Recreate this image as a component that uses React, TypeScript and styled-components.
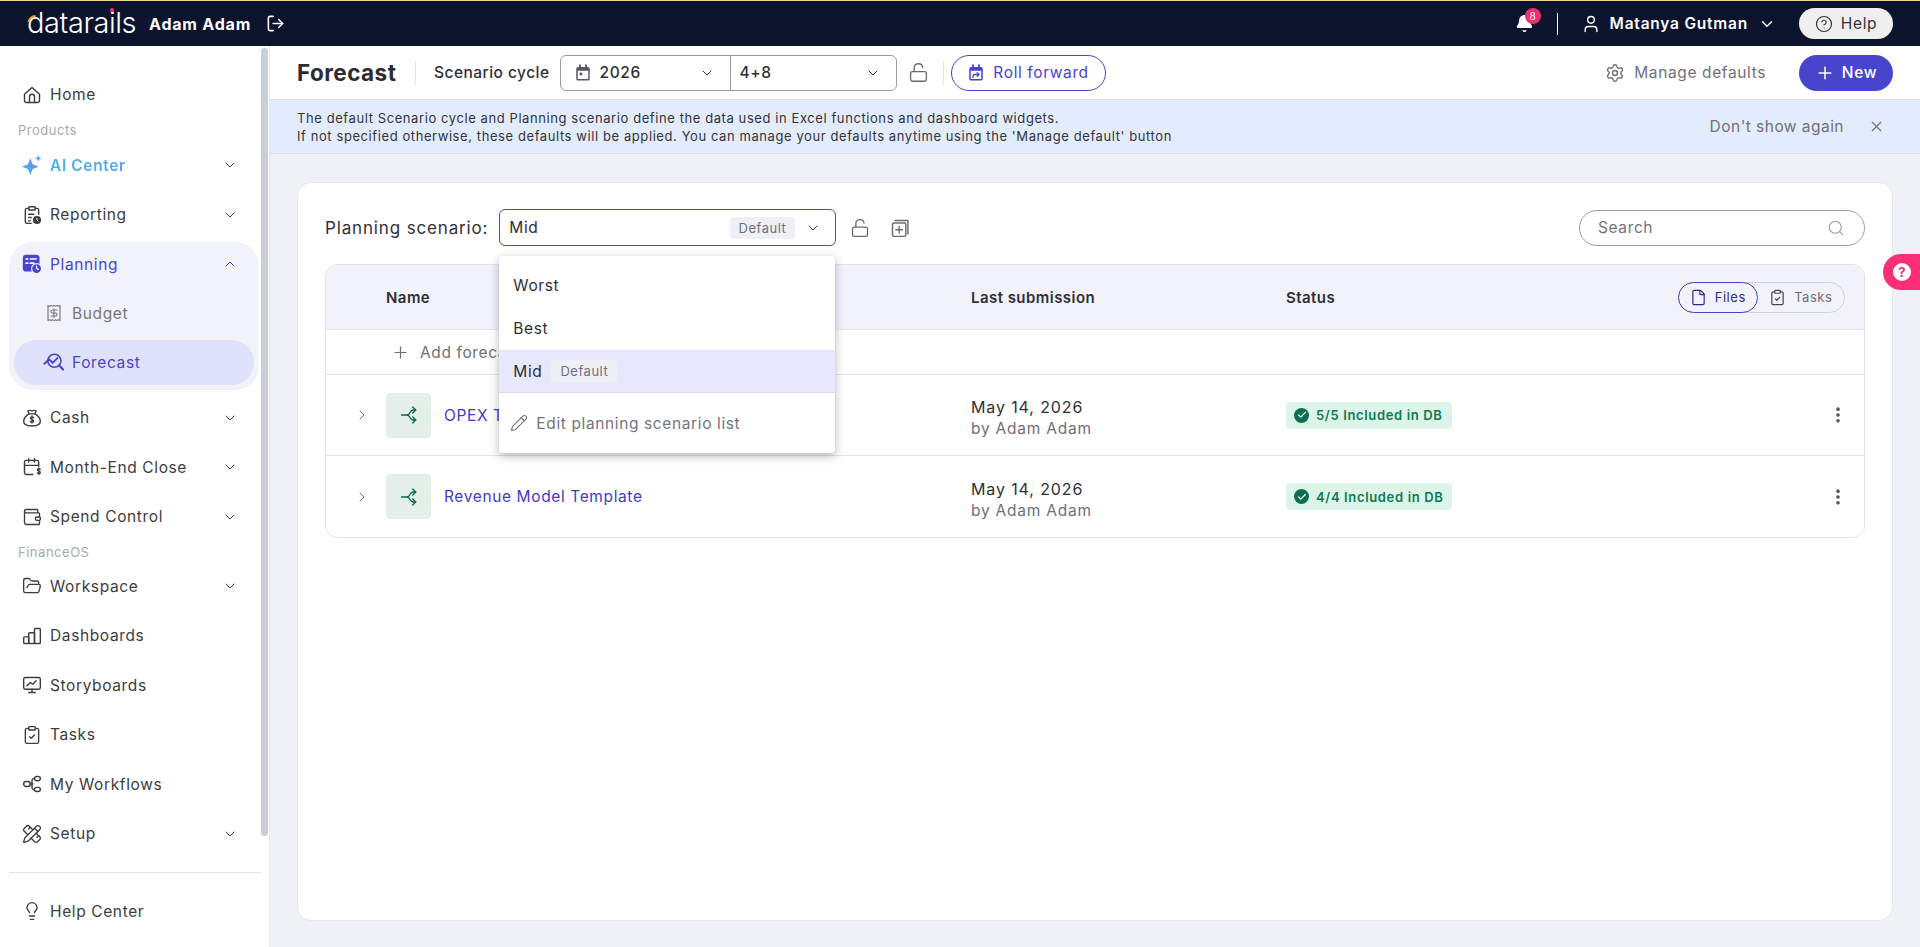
import React from "react";
import styled, { createGlobalStyle } from "styled-components";
import {
  Bell,
  Check,
  ChevronDown,
  ChevronRight,
  ChevronUp,
  CircleHelp,
  ClipboardCheck,
  File,
  FolderOpen,
  Lightbulb,
  LockOpen,
  LogOut,
  MoreVertical,
  Pencil,
  PencilRuler,
  Plus,
  Receipt,
  Search,
  Settings,
  User,
  Wallet,
  X,
} from "lucide-react";

const Global = createGlobalStyle`
  * { box-sizing: border-box; letter-spacing: 0.04em; }
  html, body { margin: 0; height: 100%; }
  body {
    font-family: Inter, "Open Sans", sans-serif;
    color: #2f2f35;
    background: #f0f1f6;
    overflow: hidden;
  }
`;

const Page = styled.div`
  height: 947px;
  display: flex;
  flex-direction: column;
`;

const TopBar = styled.header`
  height: 46px;
  flex-shrink: 0;
  background: #0b132d;
  border-top: 1px solid #f6cf9c;
  display: flex;
  align-items: center;
  padding: 0 27px;
  color: #fff;
`;

const Logo = styled.div`
  position: relative;
  font-size: 29px;
  font-weight: 300;
  width: 113px;
  letter-spacing: -0.015em;
  line-height: 1;
  margin-top: -3px;
  white-space: nowrap;
  svg {
    position: absolute;
    left: 0;
    top: 0;
  }
`;

const LogoI = styled.span`
  position: relative;
  letter-spacing: -0.015em;
  &::after {
    content: "";
    position: absolute;
    left: 50%;
    top: 3px;
    width: 4px;
    height: 4px;
    margin-left: -2px;
    border-radius: 50%;
    background: #ee2e6f;
  }
`;

const Account = styled.span`
  margin-left: 9px;
  font-size: 16px;
  font-weight: 700;
  letter-spacing: 0.05em;
`;

const ExitBtn = styled.span`
  display: flex;
  margin-left: 15px;
`;

const TopRight = styled.div`
  margin-left: auto;
  display: flex;
  align-items: center;
`;

const BellWrap = styled.span`
  position: relative;
  display: flex;
  margin-right: 23px;
`;

const Badge = styled.span`
  position: absolute;
  left: 10px;
  top: -6px;
  width: 16px;
  height: 16px;
  border-radius: 50%;
  background: #ee2e6f;
  font-size: 10px;
  letter-spacing: 0;
  display: flex;
  align-items: center;
  justify-content: center;
`;

const VDivider = styled.span<{ $h: number; $color: string }>`
  width: 1px;
  height: ${(p) => p.$h}px;
  background: ${(p) => p.$color};
  flex-shrink: 0;
`;

const UserIcon = styled.span`
  display: flex;
  margin-left: 23px;
`;

const UserName = styled.span`
  font-size: 15.5px;
  font-weight: 600;
  letter-spacing: 0.05em;
  margin: 0 10px 0 9px;
`;

const HelpBtn = styled.button`
  margin-left: 23px;
  width: 94px;
  height: 31px;
  border: 0;
  border-radius: 16px;
  background: #efefef;
  color: #33333a;
  font: inherit;
  font-size: 15.5px;
  display: flex;
  align-items: center;
  justify-content: center;
  gap: 8px;
`;

const Body = styled.div`
  flex: 1;
  min-height: 0;
  display: flex;
`;

const Sidebar = styled.aside`
  position: relative;
  width: 270px;
  flex-shrink: 0;
  background: #fff;
  border-right: 1px solid #e6e7ed;
  padding: 24px 0 11px;
  display: flex;
  flex-direction: column;
`;

const Thumb = styled.div`
  position: absolute;
  left: 261px;
  top: 2px;
  width: 7px;
  height: 788px;
  border-radius: 4px;
  background: #c9ced8;
`;

const NavRow = styled.div`
  height: 49.5px;
  padding: 0 23px 0 22px;
  display: flex;
  align-items: center;
  gap: 8px;
  width: 261px;
  font-size: 15.5px;
  color: #3c3c42;
  svg {
    flex-shrink: 0;
  }
`;

const NavLabel = styled.span`
  flex: 1;
`;

const AiLabel = styled(NavLabel)`
  font-weight: 600;
  background: linear-gradient(90deg, #3fb6e4, #6b8bfb);
  -webkit-background-clip: text;
  background-clip: text;
  color: transparent;
`;

const SectionLabel = styled.div<{ $h: number }>`
  height: ${(p) => p.$h}px;
  padding-left: 18px;
  display: flex;
  align-items: center;
  font-size: 13px;
  color: #a9a9af;
`;

const PlanningGroup = styled.div`
  margin: 2.5px 0 3px 9px;
  width: 250px;
  height: 148px;
  border-radius: 24px;
  background: #f1f2fa;
  padding: 0 5px;
  display: flex;
  flex-direction: column;
`;

const GroupHead = styled.div`
  height: 44px;
  padding: 0 16px 0 8px;
  display: flex;
  align-items: center;
  gap: 8px;
  font-size: 15.5px;
  color: #4845cc;
`;

const SubRow = styled.div`
  height: 54px;
  padding: 0 0 0 31px;
  display: flex;
  align-items: center;
  gap: 9px;
  font-size: 15.5px;
  color: #76767e;
`;

const SubRowActive = styled.div`
  height: 45px;
  border-radius: 23px;
  background: #e0e1fa;
  padding: 0 0 0 29px;
  display: flex;
  align-items: center;
  gap: 8px;
  font-size: 15.5px;
  color: #4845cc;
`;

const SideFooter = styled.div`
  margin-top: auto;
  margin-left: 9px;
  width: 252px;
  border-top: 1px solid #e3e4ea;
  padding-top: 14px;
`;

const FooterRow = styled(NavRow)`
  margin-left: -9px;
`;

const Main = styled.main`
  flex: 1;
  min-width: 0;
  display: flex;
  flex-direction: column;
`;

const Header = styled.div`
  height: 54px;
  flex-shrink: 0;
  background: #fff;
  border-bottom: 1px solid #dfe0e6;
  padding: 0 27px;
  display: flex;
  align-items: center;
`;

const Title = styled.h1`
  margin: 0;
  width: 118px;
  font-size: 22.5px;
  font-weight: 700;
  color: #2b2b30;
  letter-spacing: 0.02em;
`;

const CycleLabel = styled.span`
  margin: 0 10px 0 18px;
  font-size: 15.5px;
  font-weight: 500;
  letter-spacing: 0.03em;
`;

const SelectGroup = styled.div`
  width: 337px;
  height: 36px;
  border: 1px solid #9c9ca5;
  border-radius: 6px;
  display: flex;
`;

const SelectPart = styled.div<{ $w: number; $divider?: boolean }>`
  width: ${(p) => p.$w}px;
  padding: 0 15px 0 ${(p) => (p.$divider ? 9 : 13)}px;
  border-left: ${(p) => (p.$divider ? "1px solid #9c9ca5" : "0")};
  display: flex;
  align-items: center;
  gap: 8px;
  font-size: 15.5px;
  font-weight: 500;
`;

const Grow = styled.span`
  flex: 1;
`;

const LockBtn = styled.span<{ $ml: number; $mr: number }>`
  display: flex;
  margin: 0 ${(p) => p.$mr}px 0 ${(p) => p.$ml}px;
  color: #6a6a72;
`;

const RollBtn = styled.button`
  margin-left: 7px;
  width: 155px;
  height: 36px;
  border: 1px solid #4845cc;
  border-radius: 18px;
  background: #fff;
  color: #4845cc;
  font: inherit;
  font-size: 15.5px;
  display: flex;
  align-items: center;
  justify-content: center;
  gap: 8px;
`;

const HeaderRight = styled.div`
  margin-left: auto;
  display: flex;
  align-items: center;
`;

const ManageBtn = styled.span`
  display: flex;
  align-items: center;
  gap: 9px;
  font-size: 15.5px;
  color: #707078;
  margin-right: 33px;
`;

const NewBtn = styled.button`
  width: 94px;
  height: 36px;
  border: 0;
  border-radius: 18px;
  background: #4845cc;
  color: #fff;
  font: inherit;
  font-size: 15.5px;
  font-weight: 500;
  display: flex;
  align-items: center;
  justify-content: center;
  gap: 7px;
`;

const Banner = styled.div`
  height: 54px;
  flex-shrink: 0;
  background: #e3ecfc;
  border-bottom: 1px solid #dfe0e6;
  padding: 0 35px 0 27px;
  display: flex;
  align-items: center;
  justify-content: space-between;
`;

const BannerText = styled.div`
  font-size: 13px;
  line-height: 18px;
  color: #33333a;
  letter-spacing: 0.045em;
`;

const BannerActions = styled.div`
  display: flex;
  align-items: center;
  gap: 24px;
  font-size: 15.5px;
  letter-spacing: 0.03em;
  color: #707078;
`;

const Content = styled.div`
  flex: 1;
  min-height: 0;
  padding: 28px 27px 26px;
  display: flex;
`;

const Card = styled.section`
  flex: 1;
  background: #fff;
  border: 1px solid #e6e7ed;
  border-radius: 14px;
  padding: 26px 27px;
`;

const Toolbar = styled.div`
  height: 37px;
  margin-bottom: 18px;
  display: flex;
  align-items: center;
`;

const ScenarioLabel = styled.span`
  font-size: 17px;
  margin-right: 11px;
  letter-spacing: 0.05em;
`;

const ScenarioWrap = styled.div`
  position: relative;
`;

const ScenarioSelect = styled.div`
  width: 337px;
  height: 37px;
  border: 1px solid #4845cc;
  border-radius: 6px;
  padding: 0 14px 0 9px;
  display: flex;
  align-items: center;
  font-size: 15.5px;
`;

const Chip = styled.span`
  height: 22px;
  padding: 0 9px;
  border-radius: 4px;
  background: #eff0f5;
  color: #707078;
  font-size: 13px;
  display: inline-flex;
  align-items: center;
  margin-right: 10px;
`;

const Menu = styled.div`
  position: absolute;
  z-index: 5;
  left: 0;
  top: 47px;
  width: 336px;
  height: 197px;
  padding-top: 8px;
  background: #fff;
  border-radius: 4px;
  box-shadow: 0 3px 10px rgba(40, 40, 60, 0.35);
`;

const MenuItem = styled.div<{ $active?: boolean }>`
  height: 43px;
  padding: 0 14px;
  display: flex;
  align-items: center;
  gap: 9px;
  font-size: 15.5px;
  background: ${(p) => (p.$active ? "#e7e8fb" : "transparent")};
  border-bottom: ${(p) => (p.$active ? "1px solid #d9d9e2" : "0")};
`;

const MenuEdit = styled.div`
  height: 60px;
  padding: 0 11px;
  display: flex;
  align-items: center;
  gap: 8px;
  font-size: 15.5px;
  color: #74747c;
`;

const SearchBox = styled.div`
  margin-left: auto;
  width: 286px;
  height: 36px;
  border: 1px solid #9c9ca5;
  border-radius: 18px;
  padding: 0 19px 0 18px;
  display: flex;
  align-items: center;
  justify-content: space-between;
  font-size: 15.5px;
  color: #74747c;
`;

const Table = styled.div`
  border: 1px solid #e3e4ea;
  border-radius: 12px;
  overflow: hidden;
`;

const Row = styled.div<{ $h: number; $last?: boolean }>`
  height: ${(p) => p.$h}px;
  display: grid;
  grid-template-columns: 60px 585px 315px 1fr 56px;
  align-items: center;
  border-bottom: ${(p) => (p.$last ? "0" : "1px solid #e3e4ea")};
`;

const HeadRow = styled(Row)`
  grid-template-columns: 60px 585px 315px 1fr auto;
  background: #f1f2fa;
  font-size: 15px;
  font-weight: 600;
  span {
    letter-spacing: 0.03em;
  }
`;

const Toggle = styled.div`
  margin-right: 19px;
  width: 167px;
  height: 31px;
  border: 1px solid #cfd0d8;
  border-radius: 16px;
  display: flex;
  font-size: 13px;
  font-weight: 400;
  color: #707078;
`;

const ToggleItem = styled.div<{ $active?: boolean }>`
  height: 31px;
  margin-top: -1px;
  margin-left: ${(p) => (p.$active ? "-1px" : "0")};
  width: ${(p) => (p.$active ? 80 : 87)}px;
  border: ${(p) => (p.$active ? "1px solid #4845cc" : "0")};
  border-radius: 16px;
  display: flex;
  align-items: center;
  justify-content: center;
  gap: 8px;
  color: ${(p) => (p.$active ? "#2f2c8e" : "#707078")};
  svg {
    color: ${(p) => (p.$active ? "#2f2c8e" : "#44444c")};
  }
`;

const AddCell = styled.div`
  grid-column: 2;
  padding-left: 5px;
  display: flex;
  align-items: center;
  gap: 10px;
  font-size: 15.5px;
  color: #707078;
`;

const ExpandCell = styled.div`
  padding-left: 28px;
  display: flex;
  color: #74747c;
`;

const NameCell = styled.div`
  display: flex;
  align-items: center;
  gap: 13px;
`;

const Tile = styled.div`
  width: 45px;
  height: 45px;
  border-radius: 4px;
  background: #e5efe9;
  color: #0a6b4f;
  display: flex;
  align-items: center;
  justify-content: center;
`;

const FileLink = styled.a`
  font-size: 15.5px;
  color: #3f3bc7;
`;

const Submission = styled.div`
  padding-top: 6px;
  font-size: 16px;
  line-height: 22px;
  letter-spacing: 0.055em;
  small {
    display: block;
    font-size: 15.5px;
    color: #707078;
    letter-spacing: 0.05em;
  }
`;

const StatusChip = styled.span`
  width: fit-content;
  height: 27px;
  padding: 0 9px 0 8px;
  border-radius: 4px;
  background: #dcf5e8;
  color: #0b7a56;
  font-size: 13px;
  font-weight: 600;
  letter-spacing: 0.05em;
  display: flex;
  align-items: center;
  gap: 7px;
`;

const CheckDot = styled.span`
  width: 15px;
  height: 15px;
  border-radius: 50%;
  background: #0b6e50;
  color: #fff;
  display: flex;
  align-items: center;
  justify-content: center;
`;

const KebabCell = styled.div`
  justify-self: end;
  margin-right: 16px;
  display: flex;
  color: #55555d;
`;

const HelpTab = styled.div`
  position: fixed;
  right: 0;
  top: 254px;
  width: 37px;
  height: 36px;
  border-radius: 18px 0 0 18px;
  background: #fb2e76;
  display: flex;
  align-items: center;
  padding-left: 10px;
`;

const HelpDot = styled.span`
  width: 18px;
  height: 18px;
  border-radius: 50%;
  background: #fff;
  color: #fb2e76;
  font-size: 13px;
  font-weight: 700;
  letter-spacing: 0;
  display: flex;
  align-items: center;
  justify-content: center;
`;

const icon = { size: 20, strokeWidth: 1.6 };

const SvgIcon = ({ children, size = 20 }: { children: React.ReactNode; size?: number }) => (
  <svg
    width={size}
    height={size}
    viewBox="0 0 24 24"
    fill="none"
    stroke="currentColor"
    strokeWidth={1.7}
    strokeLinecap="round"
    strokeLinejoin="round"
  >
    {children}
  </svg>
);

const HomeIcon = () => (
  <SvgIcon>
    <path d="M3 11l9-8 9 8v8a2 2 0 0 1-2 2H5a2 2 0 0 1-2-2z" />
    <path d="M9 21v-7a3 3 0 0 1 6 0v7" />
  </SvgIcon>
);

const SparkIcon = () => (
  <svg width="20" height="20" viewBox="0 0 24 24">
    <defs>
      <linearGradient id="ai" x1="0" y1="1" x2="1" y2="0">
        <stop offset="0" stopColor="#3fb6e4" />
        <stop offset="1" stopColor="#6b8bfb" />
      </linearGradient>
    </defs>
    <path d="M10 4l2.800 7.200L20 14l-7.200 2.800L10 24l-2.800-7.200L0 14l7.200-2.800z" fill="url(#ai)" />
    <path d="M19.500 0l1.100 2.900L23.500 4l-2.900 1.100-1.100 2.900-1.100-2.900L15.500 4l2.900-1.100z" fill="url(#ai)" />
  </svg>
);

const ReportIcon = () => (
  <SvgIcon>
    <path d="M11 22H6a2 2 0 0 1-2-2V6a2 2 0 0 1 2-2h2m8 0h2a2 2 0 0 1 2 2v5" />
    <rect x="8" y="2" width="8" height="4" rx="1" />
    <path d="M8 11h6M8 15h3M8 19h2" />
    <circle cx="18" cy="18" r="4" fill="currentColor" />
    <path d="M18 16v2l1 1" stroke="#fff" strokeWidth={1.2} />
  </SvgIcon>
);

const PlanningIcon = () => (
  <svg width="20" height="20" viewBox="0 0 24 24">
    <rect x="1" y="1" width="20" height="20" rx="4" fill="#4845cc" />
    <path d="M5 6h2M10 6h7M5 11h2M10 11h4" stroke="#fff" strokeWidth="2" strokeLinecap="round" />
    <circle cx="17.500" cy="17.500" r="6" fill="#4845cc" stroke="#f1f2fa" strokeWidth="1.400" />
    <path d="M17.500 14.500v3l2 1" stroke="#fff" strokeWidth="1.500" fill="none" strokeLinecap="round" />
  </svg>
);

const ForecastIcon = () => (
  <SvgIcon size={21}>
    <circle cx="13" cy="10" r="7.500" />
    <path d="M18.500 15.500L23 20" strokeWidth={2.4} />
    <path d="M1.500 13.500L7 8.500l4 4 5.500-5.500" strokeWidth={2.2} />
  </SvgIcon>
);

const BagIcon = () => (
  <SvgIcon>
    <path d="M8.500 7L7 3.500c2-1 3-1 5 0 2-1 3-1 5 0L15.500 7" />
    <path d="M8.500 7h7c3.500 2 6.500 5.500 6.500 9 0 3.500-3 5.500-10 5.500S2 19.500 2 16c0-3.500 3-7 6.500-9z" />
    <path d="M14 11.500c-.5-.7-1.200-1-2-1-1.200 0-2 .7-2 1.600 0 2.300 4 1.300 4 3.500 0 1-.9 1.600-2 1.600-.9 0-1.700-.4-2.100-1.100M12 9.500v8.500" strokeWidth={1.5} />
  </SvgIcon>
);

const MonthEndIcon = () => (
  <SvgIcon>
    <path d="M13 21H5a2 2 0 0 1-2-2V6a2 2 0 0 1 2-2h13a2 2 0 0 1 2 2v5" />
    <path d="M8 2v4M15 2v4M3 10h17" />
    <path d="M22 15c-.4-.6-1-1-1.800-1-1 0-1.700.6-1.700 1.400 0 2 3.500 1.200 3.500 3.100 0 .9-.8 1.500-1.800 1.500-.8 0-1.500-.4-1.800-1M20.200 13v8" strokeWidth={1.5} />
  </SvgIcon>
);

const BarsIcon = () => (
  <SvgIcon>
    <rect x="2" y="13" width="6" height="8" rx="1" />
    <rect x="8" y="8" width="7" height="13" rx="1" />
    <rect x="15" y="3" width="7" height="18" rx="1" />
  </SvgIcon>
);

const StoryIcon = () => (
  <SvgIcon>
    <rect x="2" y="3" width="20" height="14" rx="2" />
    <path d="M6 13l4-4 3 2 4-4M12 17v4M8 21h8" />
  </SvgIcon>
);

const WorkflowIcon = () => (
  <SvgIcon>
    <rect x="2" y="9" width="8" height="6" rx="3" />
    <rect x="15" y="3" width="7" height="5" rx="2.500" />
    <rect x="15" y="16" width="7" height="5" rx="2.500" />
    <path d="M10 12h3M15 5.500h-1a2 2 0 0 0-2 2v9a2 2 0 0 0 2 2h1" />
  </SvgIcon>
);

const SplitIcon = () => (
  <SvgIcon>
    <path d="M3 12h7c3 0 3-6 7-6h3" />
    <path d="M10 12c3 0 3 6 7 6h3" />
    <path d="M16.500 2.500L20 6l-3.500 3.500M16.500 14.500L20 18l-3.500 3.500" />
  </SvgIcon>
);

const RollIcon = () => (
  <svg width="18" height="18" viewBox="0 0 24 24">
    <rect x="3" y="4" width="18" height="18" rx="2.500" fill="#4845cc" />
    <path d="M8 1.500v5M16 1.500v5" stroke="#4845cc" strokeWidth="2.500" strokeLinecap="round" />
    <rect x="5" y="9" width="14" height="11" fill="#fff" />
    <path d="M8 18v-2a2 2 0 0 1 2-2h6m-2.500-2.500L16 14l-2.500 2.500" stroke="#4845cc" strokeWidth="1.800" fill="none" strokeLinecap="round" />
  </svg>
);

const CopyPlusIcon = () => (
  <SvgIcon>
    <rect x="3" y="6" width="16" height="16" rx="1.500" />
    <path d="M6 3h15.500v16M11 10v8M7 14h8" />
  </SvgIcon>
);

const CalendarSolid = () => (
  <svg width="18" height="18" viewBox="0 0 24 24">
    <rect x="3" y="4" width="18" height="18" rx="2.500" fill="#57575f" />
    <path d="M8 1.500v5M16 1.500v5" stroke="#57575f" strokeWidth="2.500" strokeLinecap="round" />
    <rect x="5" y="9" width="14" height="11" fill="#fff" />
    <rect x="7.500" y="11.500" width="3.500" height="3.500" fill="#57575f" />
  </svg>
);

const navTop = [
  { label: "AI Center", icon: <SparkIcon />, ai: true },
  { label: "Reporting", icon: <ReportIcon /> },
];

const navMid = [
  { label: "Cash", icon: <BagIcon />, chevron: true },
  { label: "Month-End Close", icon: <MonthEndIcon />, chevron: true },
  { label: "Spend Control", icon: <Wallet {...icon} />, chevron: true },
];

const navOs = [
  { label: "Workspace", icon: <FolderOpen {...icon} />, chevron: true },
  { label: "Dashboards", icon: <BarsIcon /> },
  { label: "Storyboards", icon: <StoryIcon /> },
  { label: "Tasks", icon: <ClipboardCheck {...icon} /> },
  { label: "My Workflows", icon: <WorkflowIcon /> },
  { label: "Setup", icon: <PencilRuler {...icon} />, chevron: true },
];

const rows = [
  { name: "OPEX Template", count: "5/5 Included in DB" },
  { name: "Revenue Model Template", count: "4/4 Included in DB", last: true },
];

export default function App() {
  return (
    <Page>
      <Global />
      <TopBar>
        <Logo>
          datara<LogoI>i</LogoI>ls
          <svg width="12" height="24" viewBox="0 0 12 24" fill="none">
            <path d="M8.500 8A7 7 0 0 0 1.500 14" stroke="#f59a23" strokeWidth="2" />
          </svg>
        </Logo>
        <Account>Adam Adam</Account>
        <ExitBtn>
          <LogOut size={19} strokeWidth={2} />
        </ExitBtn>
        <TopRight>
          <BellWrap>
            <Bell size={19} fill="#fff" strokeWidth={1.5} />
            <Badge>8</Badge>
          </BellWrap>
          <VDivider $h={22} $color="#fff" />
          <UserIcon>
            <User size={20} strokeWidth={1.7} />
          </UserIcon>
          <UserName>Matanya Gutman</UserName>
          <ChevronDown size={18} strokeWidth={1.8} />
          <HelpBtn>
            <CircleHelp size={18} strokeWidth={1.6} />
            Help
          </HelpBtn>
        </TopRight>
      </TopBar>
      <Body>
        <Sidebar>
          <Thumb />
          <NavRow>
            <HomeIcon />
            <NavLabel>Home</NavLabel>
          </NavRow>
          <SectionLabel $h={21}>Products</SectionLabel>
          {navTop.map((n) => (
            <NavRow key={n.label}>
              {n.icon}
              {n.ai ? <AiLabel>{n.label}</AiLabel> : <NavLabel>{n.label}</NavLabel>}
              <ChevronDown size={16} strokeWidth={1.5} />
            </NavRow>
          ))}
          <PlanningGroup>
            <GroupHead>
              <PlanningIcon />
              <NavLabel>Planning</NavLabel>
              <ChevronUp size={16} strokeWidth={1.5} />
            </GroupHead>
            <SubRow>
              <Receipt size={18} strokeWidth={1.5} />
              Budget
            </SubRow>
            <SubRowActive>
              <ForecastIcon />
              Forecast
            </SubRowActive>
          </PlanningGroup>
          {navMid.map((n) => (
            <NavRow key={n.label}>
              {n.icon}
              <NavLabel>{n.label}</NavLabel>
              <ChevronDown size={16} strokeWidth={1.5} />
            </NavRow>
          ))}
          <SectionLabel $h={20}>FinanceOS</SectionLabel>
          {navOs.map((n) => (
            <NavRow key={n.label}>
              {n.icon}
              <NavLabel>{n.label}</NavLabel>
              {n.chevron && <ChevronDown size={16} strokeWidth={1.5} />}
            </NavRow>
          ))}
          <SideFooter>
            <FooterRow>
              <Lightbulb {...icon} />
              <NavLabel>Help Center</NavLabel>
            </FooterRow>
          </SideFooter>
        </Sidebar>
        <Main>
          <Header>
            <Title>Forecast</Title>
            <VDivider $h={24} $color="#e3e4ea" />
            <CycleLabel>Scenario cycle</CycleLabel>
            <SelectGroup>
              <SelectPart $w={169}>
                <CalendarSolid />
                <Grow>2026</Grow>
                <ChevronDown size={16} strokeWidth={1.5} />
              </SelectPart>
              <SelectPart $w={166} $divider>
                <Grow>4+8</Grow>
                <ChevronDown size={16} strokeWidth={1.5} />
              </SelectPart>
            </SelectGroup>
            <LockBtn $ml={11} $mr={14}>
              <LockOpen size={21} strokeWidth={1.5} />
            </LockBtn>
            <VDivider $h={24} $color="#e3e4ea" />
            <RollBtn>
              <RollIcon />
              Roll forward
            </RollBtn>
            <HeaderRight>
              <ManageBtn>
                <Settings size={20} strokeWidth={1.7} />
                Manage defaults
              </ManageBtn>
              <NewBtn>
                <Plus size={20} strokeWidth={1.8} />
                New
              </NewBtn>
            </HeaderRight>
          </Header>
          <Banner>
            <BannerText>
              The default Scenario cycle and Planning scenario define the data used in Excel functions and dashboard widgets.
              <br />
              If not specified otherwise, these defaults will be applied. You can manage your defaults anytime using the 'Manage default' button
            </BannerText>
            <BannerActions>
              Don't show again
              <X size={17} strokeWidth={1.6} />
            </BannerActions>
          </Banner>
          <Content>
            <Card>
              <Toolbar>
                <ScenarioLabel>Planning scenario:</ScenarioLabel>
                <ScenarioWrap>
                  <ScenarioSelect>
                    <Grow>Mid</Grow>
                    <Chip>Default</Chip>
                    <ChevronDown size={16} strokeWidth={1.5} />
                  </ScenarioSelect>
                  <Menu>
                    <MenuItem>Worst</MenuItem>
                    <MenuItem>Best</MenuItem>
                    <MenuItem $active>
                      Mid
                      <Chip>Default</Chip>
                    </MenuItem>
                    <MenuEdit>
                      <Pencil size={18} strokeWidth={1.5} />
                      Edit planning scenario list
                    </MenuEdit>
                  </Menu>
                </ScenarioWrap>
                <LockBtn $ml={14} $mr={20}>
                  <LockOpen size={20} strokeWidth={1.6} />
                </LockBtn>
                <LockBtn $ml={0} $mr={0}>
                  <CopyPlusIcon />
                </LockBtn>
                <SearchBox>
                  Search
                  <Search size={18} strokeWidth={1.5} color="#a5a5ad" />
                </SearchBox>
              </Toolbar>
              <Table>
                <HeadRow $h={65}>
                  <span />
                  <span>Name</span>
                  <span>Last submission</span>
                  <span>Status</span>
                  <Toggle>
                    <ToggleItem $active>
                      <File size={17} strokeWidth={1.7} />
                      Files
                    </ToggleItem>
                    <ToggleItem>
                      <ClipboardCheck size={17} strokeWidth={1.7} />
                      Tasks
                    </ToggleItem>
                  </Toggle>
                </HeadRow>
                <Row $h={45}>
                  <AddCell>
                    <Plus size={19} strokeWidth={1.5} />
                    Add forecast file
                  </AddCell>
                </Row>
                {rows.map((r) => (
                  <Row key={r.name} $h={81} $last={r.last}>
                    <ExpandCell>
                      <ChevronRight size={16} strokeWidth={1.5} />
                    </ExpandCell>
                    <NameCell>
                      <Tile>
                        <SplitIcon />
                      </Tile>
                      <FileLink>{r.name}</FileLink>
                    </NameCell>
                    <Submission>
                      May 14, 2026
                      <small>by Adam Adam</small>
                    </Submission>
                    <StatusChip>
                      <CheckDot>
                        <Check size={10} strokeWidth={3} />
                      </CheckDot>
                      {r.count}
                    </StatusChip>
                    <KebabCell>
                      <MoreVertical size={20} strokeWidth={2.4} />
                    </KebabCell>
                  </Row>
                ))}
              </Table>
            </Card>
          </Content>
        </Main>
      </Body>
      <HelpTab>
        <HelpDot>?</HelpDot>
      </HelpTab>
    </Page>
  );
}
